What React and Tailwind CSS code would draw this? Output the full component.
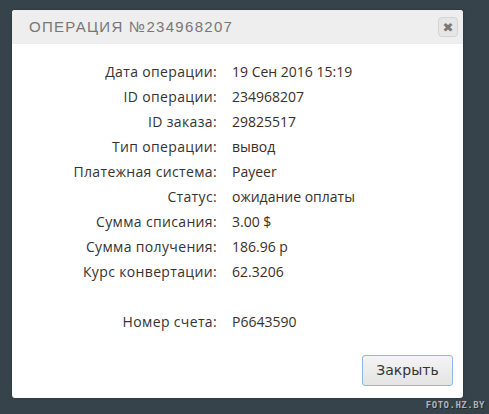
import React from 'react';

const rows = [
  ['Дата операции:', '19 Сен 2016 15:19'],
  ['ID операции:', '234968207'],
  ['ID заказа:', '29825517'],
  ['Тип операции:', 'вывод'],
  ['Платежная система:', 'Payeer'],
  ['Статус:', 'ожидание оплаты'],
  ['Сумма списания:', '3.00 $'],
  ['Сумма получения:', '186.96 р'],
  ['Курс конвертации:', '62.3206'],
  ['', ''],
  ['Номер счета:', 'P6643590'],
];

const App = () => {
  return (
    <div className="relative w-[489px] h-[414px] bg-[#36434b] overflow-hidden pt-[10px] pl-[12px]">
      {/* Modal */}
      <div className="w-[451px] h-[388px] bg-white rounded-[3px] flex flex-col shadow-[0_0_2px_rgba(0,0,0,0.4)]">
        {/* Header */}
        <div className="h-[34px] bg-[#eeeeee] rounded-t-[3px] flex items-center justify-between pl-[17px] pr-[5px]">
          <h2 className="text-[15px] tracking-[1.3px] text-[#777] font-['Liberation_Sans',sans-serif]">
            ОПЕРАЦИЯ №234968207
          </h2>
          <button className="w-[20px] h-[20px] rounded-[4px] border border-[#d4d4d4] bg-[#e6e6e6] flex items-center justify-center text-[#777] text-[13px] font-bold leading-none font-['DejaVu_Sans',sans-serif]">
            ✖
          </button>
        </div>

        {/* Body */}
        <div className="flex-1 pt-[15px] font-['Open_Sans',sans-serif] text-[14px] text-[#333]">
          {rows.map(([label, value], i) => (
            <div key={i} className="flex h-[25px] items-center">
              <div className="w-[205px] text-right tracking-[0.35px]">{label}</div>
              <div className="pl-[15px] text-[#3a2f28]">{value}</div>
            </div>
          ))}
        </div>

        {/* Footer */}
        <div className="flex justify-end pr-[10px] pb-[12px]">
          <button className="w-[91px] h-[31px] rounded-[3px] border border-[#8fb4ef] bg-gradient-to-b from-[#f4f4f4] to-[#e4e4e4] text-[#333] text-[14px] font-['DejaVu_Sans',sans-serif]">
            Закрыть
          </button>
        </div>
      </div>

      <div className="absolute right-[4px] bottom-[2px] text-[9px] font-bold tracking-[0.5px] text-[#aeb6bb] font-['DejaVu_Sans_Mono',monospace] [text-shadow:1px_1px_0_#1e282e]">
        FOTO.HZ.BY
      </div>
    </div>
  );
};

export default App;
